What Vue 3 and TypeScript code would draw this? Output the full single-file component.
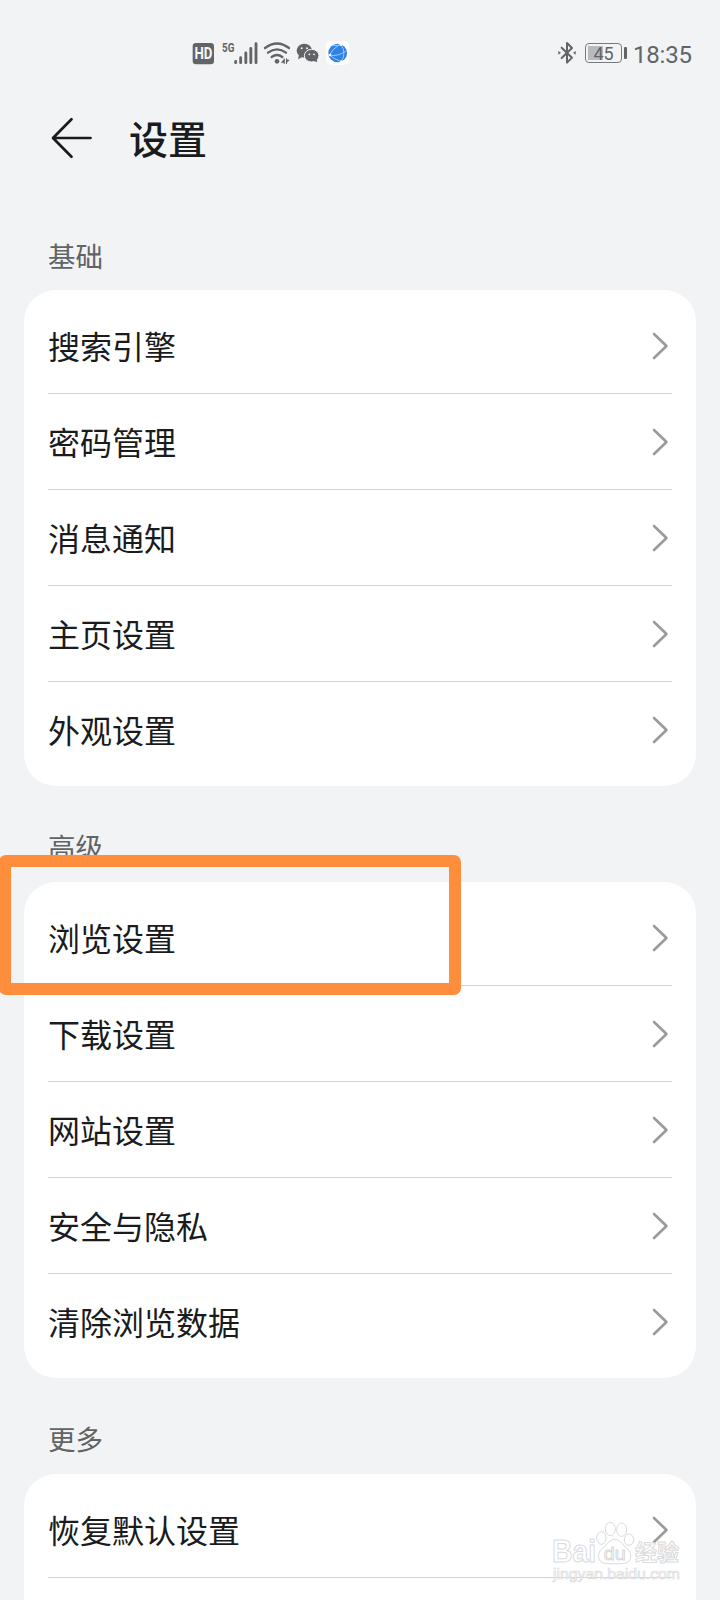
<script setup lang="ts">
interface Section {
  title: string
  items: string[]
  continues?: boolean
}

const sections: Section[] = [
  { title: '基础', items: ['搜索引擎', '密码管理', '消息通知', '主页设置', '外观设置'] },
  { title: '高级', items: ['浏览设置', '下载设置', '网站设置', '安全与隐私', '清除浏览数据'] },
  { title: '更多', items: ['恢复默认设置'], continues: true },
]
</script>

<template>
  <main class="screen">
    <header class="status">
      <svg class="status-left" viewBox="0 0 540 150" aria-hidden="true">
        <rect x="38" y="39" width="64" height="64" rx="10" fill="#626467" />
        <text x="70.500" y="87" class="hd" text-anchor="middle" textLength="54" lengthAdjust="spacingAndGlyphs">HD</text>
        <text x="126" y="66" class="net" textLength="37" lengthAdjust="spacingAndGlyphs">5G</text>
        <g stroke="#626467" stroke-width="8.500" stroke-linecap="round">
          <path d="M167 94v4M182 83v15M197.500 69v29M212.500 55v43M228 41v57" />
        </g>
        <g fill="none" stroke="#626467" stroke-width="7" stroke-linecap="round">
          <path d="M255 54Q291 27 327 54M264 68Q291 48 318 68M275 81Q291 69 307 81" />
        </g>
        <circle cx="291" cy="94" r="7" fill="#626467" />
        <path d="M314 86v12h-12zM319 88v12l10-10z" fill="#626467" />
        <path d="M312.500 86v16M319.500 85v17" stroke="#626467" stroke-width="3" />
        <ellipse cx="373" cy="62" rx="23" ry="21" fill="#626467" />
        <path d="M357 75l-3 13 13-7z" fill="#626467" />
        <ellipse cx="395" cy="77" rx="22" ry="19" fill="#626467" stroke="#f1f3f5" stroke-width="3" />
        <path d="M401 92l11 5-2-11z" fill="#626467" />
        <g fill="#f1f3f5">
          <circle cx="365" cy="55" r="3" /><circle cx="381" cy="55" r="3" />
          <circle cx="388" cy="73" r="2.800" /><circle cx="402" cy="73" r="2.800" />
        </g>
        <rect x="438" y="33" width="70" height="71" rx="15" fill="#fff" />
        <circle cx="473" cy="69" r="28" fill="#2f80e8" />
        <g fill="none" stroke="#c9e2fb" stroke-width="2.200">
          <path d="M483 43Q458 54 449 76Q475 80 500 62M483 43Q500 70 484 95M449 76Q460 86 484 95M460 47Q475 47 483 43" />
        </g>
        <g fill="#fff">
          <circle cx="483" cy="44" r="3.500" /><circle cx="450" cy="75" r="4" /><circle cx="484" cy="94" r="3.500" />
        </g>
      </svg>
      <div class="status-right">
        <svg class="bluetooth" viewBox="0 0 54 72" aria-hidden="true">
          <path d="M11 20L42 50 27 65V6L42 21 11 51" fill="none" stroke="#626467" stroke-width="6" stroke-linejoin="round" stroke-linecap="round" />
          <path d="M1 30l8 5.500-8 5.500zM53 30l-8 5.500 8 5.500z" fill="#626467" />
        </svg>
        <div class="battery"><span>45</span></div>
        <time class="clock">18:35</time>
      </div>
    </header>

    <div class="titlebar">
      <svg class="back" viewBox="0 0 42 42" aria-hidden="true">
        <path d="M20.500 2.300L2 21l18.500 18.700M2.500 21H39.500" fill="none" stroke="#1a1b1d" stroke-width="2.700" stroke-linecap="round" stroke-linejoin="round" />
      </svg>
      <h1>设置</h1>
    </div>

    <section v-for="section in sections" :key="section.title" class="section">
      <h2>{{ section.title }}</h2>
      <ul class="card" :class="{ continues: section.continues }">
        <li v-for="item in section.items" :key="item">
          <span>{{ item }}</span>
          <svg class="chevron" viewBox="0 0 18 28" aria-hidden="true">
            <path d="M3 2L15.500 14 3 26" fill="none" stroke="#999a9b" stroke-width="2.600" stroke-linecap="round" stroke-linejoin="round" />
          </svg>
        </li>
      </ul>
    </section>

    <div class="highlight"></div>

    <svg class="watermark" viewBox="0 0 540 420" aria-hidden="true">
      <g fill="#fff" fill-opacity="0.750" stroke="#d9dadb" stroke-width="3">
        <text x="36" y="306" class="wm-latin" textLength="132" lengthAdjust="spacingAndGlyphs">Bai</text>
        <ellipse cx="184" cy="234" rx="14" ry="19" />
        <ellipse cx="211" cy="207" rx="15" ry="20" />
        <ellipse cx="245" cy="209" rx="15" ry="20" />
        <ellipse cx="267" cy="239" rx="14" ry="17" />
        <path d="M224 238C240 238 246 254 260 264C278 277 277 307 253 310C240 312 208 312 194 310C170 306 171 277 188 264C202 254 208 238 224 238Z" />
        <text x="191" y="299" class="wm-du" textLength="66" lengthAdjust="spacingAndGlyphs">du</text>
        <text x="285" y="301" class="wm-cjk" textLength="132" lengthAdjust="spacingAndGlyphs">经验</text>
        <text x="39" y="358" class="wm-url" textLength="381" lengthAdjust="spacingAndGlyphs">jingyan.baidu.com</text>
      </g>
    </svg>
  </main>
</template>

<style>
body {
  margin: 0;
  background: #f1f3f5;
}
</style>

<style scoped>
.screen {
  position: relative;
  width: 720px;
  height: 1600px;
  overflow: hidden;
  background: #f1f3f5;
  font-family: "Noto Sans CJK SC", sans-serif;
  color: #1a1b1d;
}

.status {
  display: flex;
  justify-content: space-between;
  height: 50px;
  padding: 30px 28px 0 180px;
}

.status-left {
  width: 180px;
  height: 50px;
}

.hd {
  font: 700 47px Roboto, sans-serif;
  fill: #f5f6f8;
}

.net {
  font: 700 41px Roboto, sans-serif;
  fill: #626467;
}

.status-right {
  display: flex;
  align-items: flex-start;
  color: #626467;
  font-family: Roboto, sans-serif;
}

.bluetooth {
  width: 18px;
  height: 24px;
  margin: 11px 9px 0 0;
}

.battery {
  position: relative;
  box-sizing: border-box;
  width: 37px;
  height: 20px;
  margin: 13px 11px 0 0;
  border: 1px solid #77797c;
  border-radius: 4px;
  background: linear-gradient(90deg, #b9babd 0 15px, transparent 15px) 2px 2px / 31px 14px no-repeat;
  font-size: 18px;
  line-height: 19px;
  text-align: center;
  color: #626467;
}

.battery::after {
  content: "";
  position: absolute;
  right: -6px;
  top: 3px;
  width: 3px;
  height: 12px;
  border-radius: 1px;
  background: #626467;
}

.clock {
  width: 59px;
  font-size: 24px;
  line-height: 30px;
  margin-top: 10px;
  letter-spacing: -0.200px;
}

.titlebar {
  display: flex;
  align-items: center;
  height: 116px;
  padding-left: 51px;
}

.back {
  width: 42px;
  height: 42px;
}

h1 {
  margin: -3px 0 0 36px;
  font-size: 39px;
  line-height: 56px;
  font-weight: 500;
}

.section h2 {
  box-sizing: border-box;
  height: 96px;
  margin: 0;
  padding: 40px 0 0 48px;
  font-size: 27.500px;
  line-height: 40px;
  font-weight: 400;
  color: #626365;
}

.titlebar + .section h2 {
  height: 94px;
  padding-top: 39px;
}

.card {
  margin: 0 24px;
  padding: 8px 24px;
  border-radius: 32px;
  background: #fff;
  list-style: none;
}

.card.continues {
  height: 160px;
}

.card li {
  box-sizing: border-box;
  display: flex;
  align-items: center;
  justify-content: space-between;
  height: 96px;
  border-bottom: 1px solid #d2d3d4;
  font-size: 32px;
  line-height: 48px;
}

.card li span {
  margin-top: -2px;
}

.card:not(.continues) li:last-child {
  border-bottom-color: transparent;
}

.chevron {
  width: 18px;
  height: 28px;
  margin-right: 3px;
}

.highlight {
  position: absolute;
  left: -1px;
  top: 855px;
  box-sizing: border-box;
  width: 462px;
  height: 140px;
  border: 12px solid #ff8e3c;
  border-radius: 7px;
}

.watermark {
  position: absolute;
  left: 540px;
  top: 1460px;
  width: 180px;
  height: 140px;
}

.wm-latin {
  font: 700 92px "Liberation Sans", sans-serif;
}

.wm-du {
  font: 400 56px "Liberation Sans", sans-serif;
}

.wm-cjk {
  font: 700 66px "Noto Sans CJK SC", sans-serif;
}

.wm-url {
  font: 400 44px "Liberation Sans", sans-serif;
  stroke-width: 2px;
}
</style>
